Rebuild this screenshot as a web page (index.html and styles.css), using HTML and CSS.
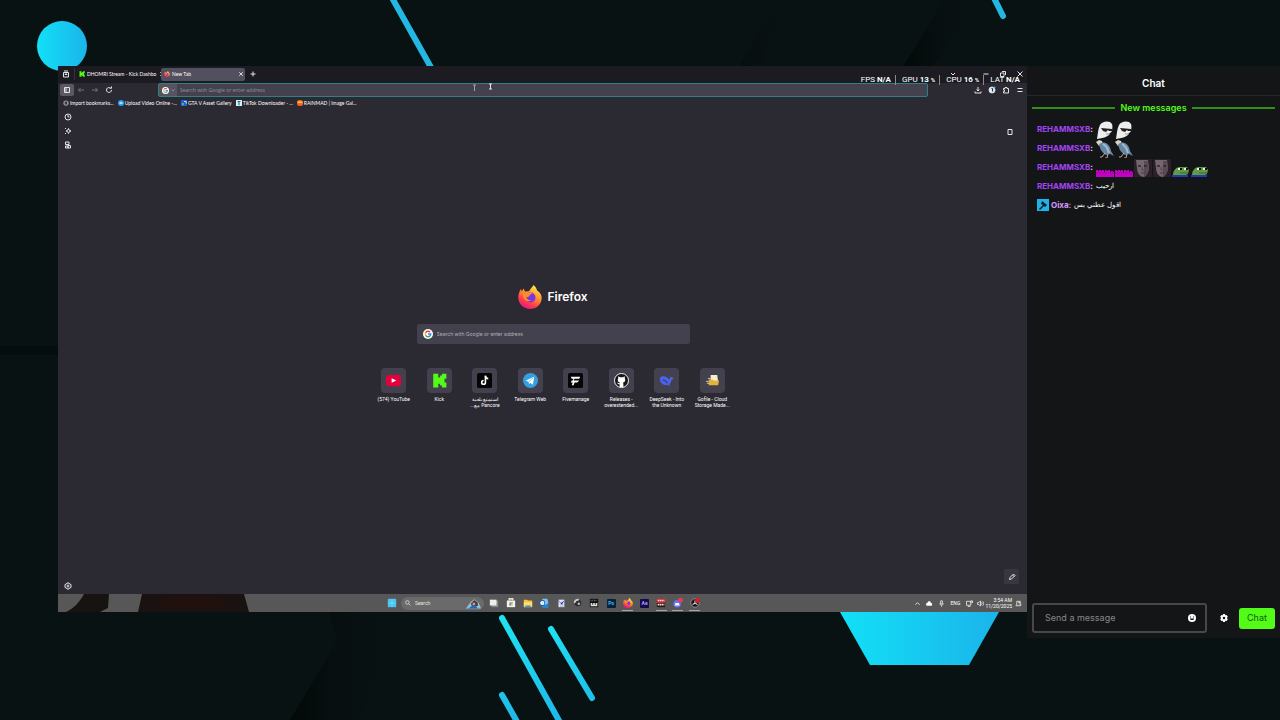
FILE: index.html
```html
<!DOCTYPE html>
<html lang="en">

<head>
    <meta charset="UTF-8">
    <meta name="viewport" content="width=device-width, initial-scale=1.0">
    <title>Stream</title>
    <link rel="stylesheet" href="styles.css">
</head>

<body>
    <svg class="backdrop" viewBox="0 0 1280 720" preserveAspectRatio="xMidYMid slice" aria-hidden="true">
        <defs>
            <linearGradient id="cyan" x1="0" x2="1">
                <stop offset="0" stop-color="#12e0f7" />
                <stop offset="1" stop-color="#1bb4ea" />
            </linearGradient>
            <linearGradient id="stripe" gradientUnits="userSpaceOnUse" x1="0" y1="618" x2="0" y2="740">
                <stop offset="0" stop-color="#1fe3f0" />
                <stop offset="1" stop-color="#1eb0e8" />
            </linearGradient>
            <linearGradient id="shade" x1="0" x2="1">
                <stop offset="0" stop-color="#030808" />
                <stop offset="1" stop-color="#091213" stop-opacity="0" />
            </linearGradient>
        </defs>
        <rect width="1280" height="720" fill="#091213" />
        <path d="M329 612l8 29-47 79h70l40-108z" fill="url(#shade)" />
        <path d="M945 0l-42 66h30l50-66z" fill="url(#shade)" />
        <path d="M775 0l-35 66h20l30-66z" fill="url(#shade)" opacity=".5" />
        <path d="M0 346h58v9H0z" fill="#060d0e" />
        <circle cx="62" cy="46" r="25" fill="url(#cyan)" />
        <path d="M840 612h159l-30 53h-99z" fill="url(#cyan)" />
        <g stroke-width="6" stroke-linecap="round">
            <path d="M391-4l42 75M993-4l10 20" stroke="#22b8e2" />
            <path d="M502 618l60 108M551 629l41 69M502 695l18 32" stroke="url(#stripe)" />
        </g>
    </svg>

    <svg class="sprite" aria-hidden="true">
        <defs>
            <linearGradient id="flame" x1=".8" y1="0" x2=".3" y2="1">
                <stop offset="0" stop-color="#fff44f" />
                <stop offset=".4" stop-color="#ff9a2b" />
                <stop offset=".75" stop-color="#ff3b4b" />
                <stop offset="1" stop-color="#e31587" />
            </linearGradient>
        </defs>
        <symbol id="firefox" viewBox="0 0 24 24">
            <path d="M15.5 0c2 1.600 3 3.500 3.600 5.500C22.500 7.500 24 10.500 23.600 14 23 20 18 24 12 24 5.500 24 .3 19 .3 12.500.3 9 1.500 6 3 4l.8 2.500L5.500 3.500l1.500 3 4-.3c1.500-2.500 3-3.700 4.500-6.200z" fill="url(#flame)" />
            <circle cx="12.500" cy="12.500" r="5" fill="#7a35e0" />
            <path d="M5 8c2-1.500 4-1 5.500-.5 1 .5 2.500.3 3.500.5-.5 1.500-2 1.500-2.500 2.500-.5 1.500-2 2-3.500 1.500 1 2.500 3 3.500 5.500 3C9 18.500 4 14 5 8z" fill="#ff8a2b" />
        </symbol>
        <symbol id="google" viewBox="0 0 24 24">
            <circle cx="12" cy="12" r="12" fill="#fff" />
            <g fill="none" stroke-width="3.500">
                <path d="M17 7.500A6.500 6.500 0 0 0 6.300 9" stroke="#ea4335" />
                <path d="M6.300 9a6.500 6.500 0 0 0 0 6" stroke="#fbbc05" />
                <path d="M6.300 15a6.500 6.500 0 0 0 10 2" stroke="#34a853" />
                <path d="M16.300 17c1.500-1.300 2.200-3 2.200-5H12" stroke="#4285f4" />
            </g>
        </symbol>
        <symbol id="kick" viewBox="0 0 24 24">
            <path d="M2 1h8v6h3V4h3V1h7v8h-3v6h3v8h-7v-3h-3v-3h-3v6H2z" fill="#53fc18" />
        </symbol>
        <symbol id="close" viewBox="0 0 10 10">
            <path d="M2 2l6 6M8 2L2 8" stroke="#ddd" stroke-width="1.600" />
        </symbol>
        <symbol id="ghost" viewBox="0 0 18 18">
            <path d="M1 18C2 12 2 8 4 4 6 0 14-1 16 3c1 3 0 5 0 7-1 2-3 2-3 4-2 2-6 3-12 4z" fill="#ededed" />
            <path d="M5 7l11 1v2h-3l-1-1-2 2-3-1z" fill="#222" />
            <path d="M10 13h4" stroke="#999" />
        </symbol>
        <symbol id="bird" viewBox="0 0 18 18">
            <path d="M0 2l3-2 3 1 1 3-4 2z" fill="#d8d4cb" />
            <path d="M3 4c6-4 11 0 12 7l3 5-4-2-4 1C5 12 4 8 3 4z" fill="#6686a5" />
            <path d="M7 4c4 2 5 5 6 9" stroke="#a0b9ce" stroke-width="2" fill="none" />
            <path d="M9 13l-3 4H4M12 14l-1 4H9" stroke="#c3a78c" fill="none" />
        </symbol>
        <symbol id="bars" viewBox="0 0 18 18">
            <path d="M0 18v-7h2v1h1v-1h2v1h1v-1h2v2h1v-2h2v1h1v-1h2v2h1v-1h2v1h1v5z" fill="#c400c4" />
            <path d="M0 14h18" stroke="#7d0b82" stroke-dasharray="1 1" />
        </symbol>
        <symbol id="face" viewBox="0 0 18 18">
            <path d="M0 0h18v18H0z" fill="#2b2029" />
            <path d="M2 1h12l1 9c-1 4-3 8-6 8-4-1-6-5-6-9z" fill="#75656d" />
            <path d="M10 2h4l1 8c-1 4-3 7-5 8z" fill="#5a4a53" />
            <path d="M4 7h3M10 7h3" stroke="#30242b" stroke-width="1.500" />
            <path d="M7 14h4" stroke="#4a363e" />
            <path d="M8 8v3h2" stroke="#54454d" fill="none" />
        </symbol>
        <symbol id="frog" viewBox="0 0 18 18">
            <path d="M1 16c0-4 2-7 6-8h8l2 3-1 4-4 2H1z" fill="#5f9a45" />
            <path d="M6 9h4v2H6zM12 9h4v2h-4z" fill="#eee" />
            <path d="M8 9h2v2H8zM14 9h2v2h-2z" fill="#111" />
            <path d="M8 14h8" stroke="#3f6b2c" />
            <path d="M0 17h16" stroke="#2437bd" stroke-width="2" />
        </symbol>
    </svg>

    <div class="stage">
        <main class="browser">
            <div class="tab-strip">
                <button class="icon-btn view-btn" aria-label="Firefox View"><svg viewBox="0 0 16 16"><path d="M3 5h10v9H3zM4 2h8M6 8h4v1H6z" /></svg></button>
                <div class="tab">
                    <svg class="favicon"><use href="#kick" /></svg>
                    <span class="tab-title">DHOMRI Stream - Kick Dashbo</span>
                    <button class="icon-btn tab-close" aria-label="Close tab"><svg><use href="#close" /></svg></button>
                </div>
                <div class="tab tab-active">
                    <svg class="favicon"><use href="#firefox" /></svg>
                    <span class="tab-title">New Tab</span>
                    <button class="icon-btn tab-close" aria-label="Close tab"><svg><use href="#close" /></svg></button>
                </div>
                <button class="icon-btn add-tab" aria-label="New tab"><svg viewBox="0 0 16 16"><path d="M8 3v10M3 8h10" /></svg></button>
                <div class="window-controls">
                    <button class="icon-btn list-tabs" aria-label="List tabs"><svg viewBox="0 0 16 16"><path d="M4 6l4 4 4-4" /></svg></button>
                    <button class="icon-btn" aria-label="Minimize"><svg viewBox="0 0 16 16"><path d="M3 8h10" /></svg></button>
                    <button class="icon-btn" aria-label="Restore"><svg viewBox="0 0 16 16"><path d="M3 6h7v7H3zM6 3h7v7" /></svg></button>
                    <button class="icon-btn" aria-label="Close"><svg viewBox="0 0 16 16"><path d="M3 3l10 10M13 3L3 13" /></svg></button>
                </div>
            </div>

            <div class="nav-bar">
                <div class="nav-buttons">
                    <button class="icon-btn pressed" aria-label="Sidebar"><svg viewBox="0 0 16 16"><path d="M3 3h10v10H3zM6 3v10" /></svg></button>
                    <button class="icon-btn dim" aria-label="Back"><svg viewBox="0 0 16 16"><path d="M14 8H3M7 4L3 8l4 4" /></svg></button>
                    <button class="icon-btn dim" aria-label="Forward"><svg viewBox="0 0 16 16"><path d="M2 8h11M9 4l4 4-4 4" /></svg></button>
                    <button class="icon-btn" aria-label="Reload"><svg viewBox="0 0 16 16"><path d="M13 8a5 5 0 1 1-2-4M9 4.500h4V1" /></svg></button>
                </div>
                <div class="url-bar">
                    <button class="engine-btn" aria-label="Search engine">
                        <svg class="engine"><use href="#google" /></svg>
                        <svg class="caret" viewBox="0 0 8 8"><path d="M1 3l3 3 3-3" /></svg>
                    </button>
                    <input type="text" class="url-input" placeholder="Search with Google or enter address" aria-label="Address">
                </div>
                <div class="nav-tools">
                    <button class="icon-btn" aria-label="Downloads"><svg viewBox="0 0 16 16"><path d="M8 2v8M5 7l3 3 3-3M2 11v3h12v-3" /></svg></button>
                    <button class="icon-btn" aria-label="Account"><svg viewBox="0 0 16 16"><circle cx="8" cy="8" r="6" fill="#d6e9f5" /><path d="M7 5h2v6" stroke="#2b2a33" /><circle cx="13" cy="3" r="2" fill="#35b6f2" stroke="none" /></svg></button>
                    <button class="icon-btn" aria-label="Extensions"><svg viewBox="0 0 16 16"><path d="M3 5h3V3h4v2h3v9H3v-3h2V8H3z" /></svg></button>
                    <button class="icon-btn" aria-label="Menu"><svg viewBox="0 0 16 16"><path d="M3 5h10M3 11h10" /></svg></button>
                </div>
            </div>

            <nav class="bookmarks">
                <a href="#"><svg viewBox="0 0 8 8"><circle cx="4" cy="4" r="3.500" fill="#9a99a3" /><path d="M3 2v4M5 2L3.500 4 5 6" stroke="#222" /></svg>Import bookmarks...</a>
                <a href="#"><svg viewBox="0 0 8 8"><circle cx="4" cy="4" r="4" fill="#2d9ff0" /><path d="M2 4h4" stroke="#d7efff" stroke-width="2" /></svg>Upload Video Online -...</a>
                <a href="#"><svg viewBox="0 0 8 8"><path d="M0 0h8v8H0z" fill="#2458e6" /><path d="M1 4h3v3H1z" fill="#35c759" /><path d="M4 2h3v3" stroke="#fff" fill="none" /></svg>GTA V Asset Gallery</a>
                <a href="#"><svg viewBox="0 0 8 8"><path d="M0 0h8v8H0z" fill="#d9f1f2" /><path d="M2 2h4M4 2v5" stroke="#147a80" stroke-width="1.500" /></svg>TikTok Downloader - ...</a>
                <a href="#"><svg viewBox="0 0 8 8"><rect width="8" height="8" rx="3" fill="#f0641e" /><path d="M1 3h6" stroke="#ffd13b" stroke-width="2" /></svg>RAINMAD | Image Gal...</a>
            </nav>

            <div class="browser-body">
                <aside class="sidebar">
                    <button class="icon-btn" aria-label="History"><svg viewBox="0 0 16 16"><circle cx="8" cy="8" r="6" /><path d="M8 4v4h3" /></svg></button>
                    <button class="icon-btn" aria-label="AI chat"><svg viewBox="0 0 16 16"><path d="M9 3l1.500 3.500L14 8l-3.500 1.500L9 13 7.500 9.500 4 8l3.500-1.500zM2 2l2 2M2 14l2-2" /></svg></button>
                    <button class="icon-btn" aria-label="Synced tabs"><svg viewBox="0 0 16 16"><path d="M3 2h7v5H3zM3 10h5v4H3zM8 9h5v5H8z" /></svg></button>
                    <button class="icon-btn side-settings" aria-label="Settings"><svg viewBox="0 0 16 16"><circle cx="8" cy="8" r="2" /><path d="M6 2h4l1 2 3 1v6l-3 1-1 2H6l-1-2-3-1V5l3-1z" /></svg></button>
                </aside>

                <section class="new-tab">
                    <button class="icon-btn device-btn" aria-label="Device"><svg viewBox="0 0 16 16"><path d="M4 3h8v10H4z" /></svg></button>
                    <div class="new-tab-center">
                        <div class="brand">
                            <svg><use href="#firefox" /></svg>
                            <h1>Firefox</h1>
                        </div>
                        <div class="home-search">
                            <svg><use href="#google" /></svg>
                            <input type="text" placeholder="Search with Google or enter address" aria-label="Search">
                        </div>
                        <div class="shortcuts">
                            <a href="#"><span class="tile"><svg viewBox="0 0 16 16"><rect y="2" width="16" height="12" rx="3" fill="#e5003b" /><path d="M6 5.500l5 2.500-5 2.500z" fill="#fff" /></svg></span>(574) YouTube</a>
                            <a href="#"><span class="tile"><svg><use href="#kick" /></svg></span>Kick</a>
                            <a href="#" dir="rtl"><span class="tile"><svg viewBox="0 0 16 16"><rect width="16" height="16" rx="2" fill="#050505" /><path d="M9 3v7a2 2 0 1 1-2-2" stroke="#fff" stroke-width="1.700" fill="none" /><path d="M9 3c0 2 1 3 3 3" stroke="#fff" stroke-width="1.700" fill="none" /></svg></span>استمتع بلعبة<br>Pancore مع...</a>
                            <a href="#"><span class="tile"><svg viewBox="0 0 16 16"><circle cx="8" cy="8" r="8" fill="#369fe0" /><path d="M3 8l9-4-1.500 8.500L7.500 10.500 6.500 12 6 9.500z" fill="#fff" /><path d="M6 9.500L11 5" stroke="#369fe0" stroke-width=".6" /></svg></span>Telegram Web</a>
                            <a href="#"><span class="tile"><svg viewBox="0 0 16 16"><rect width="16" height="16" rx="2" fill="#050505" /><path d="M3 4h10l-1 2H7L6 8h6l-2 2H7l-1 3H4l1-3H3l1-2h1l1-2H4z" fill="#fff" /></svg></span>Fivemanage</a>
                            <a href="#"><span class="tile"><svg viewBox="0 0 16 16"><circle cx="8" cy="8" r="7.500" fill="#161616" stroke="#fff" /><path d="M6 15v-3c-2 0-2-1-3-2 1 0 2 1 3 1l.3-1C4 9.500 3.500 8 4.500 5.500V3.500L6.500 4.500h3l2-1v2c1 2.500.5 4-1.800 4.500L10 12v3z" fill="#fff" /></svg></span>Releases -<br>overextended...</a>
                            <a href="#"><span class="tile"><svg viewBox="0 0 16 16"><path d="M1 5c2-2 5-2 8 0l2 2c1-.5 1-2 .5-3.500 1 1 2 1.500 4 1-.5 2-1.500 3-2.500 3.500 0 2-1 3-2 4l1 1.500-3-.8C4 13.500.5 10 1 5z" fill="#4b63f0" /><path d="M4 7.500c2 0 4 2 5 3.500" stroke="#3a3944" stroke-width="1.200" fill="none" /></svg></span>DeepSeek - Into<br>the Unknown</a>
                            <a href="#"><span class="tile"><svg viewBox="0 0 16 16"><path d="M6 2h7l1 7H6z" fill="#f6ecd0" /><path d="M4 7h4l1 1h6l-1 5H4z" fill="#e2b13c" /><path d="M1 9h3M2 11h3M3 6h3" stroke="#d8cba4" /></svg></span>Gofile - Cloud<br>Storage Made...</a>
                        </div>
                    </div>
                    <button class="icon-btn edit-btn" aria-label="Customize"><svg viewBox="0 0 16 16"><path d="M3 13l1-4 7-7 3 3-7 7zM9 4l3 3" /></svg></button>
                </section>
            </div>

            <footer class="taskbar">
                <svg class="taskbar-wallpaper" viewBox="0 0 200 18" aria-hidden="true">
                    <path d="M8 18C16 14 21 9 26 0h25l-1 14-8 4z" fill="#171311" />
                    <path d="M84 0h102l5 18H80z" fill="#1a1211" />
                    <path d="M104 3c20-3 50-1 60 0l8 12H96z" fill="#20110f" />
                </svg>
                <div class="taskbar-apps">
                    <button class="icon-btn app start" aria-label="Start"><svg viewBox="0 0 12 12"><path d="M1 1h10v10H1z" fill="#48c5f5" /><path d="M6 1v10M1 6h10" stroke="#8fe0fb" stroke-width=".6" /></svg></button>
                    <label class="task-search">
                        <svg viewBox="0 0 10 10"><circle cx="4" cy="4" r="3" fill="none" stroke="#fff" /><path d="M6.500 6.500L9 9" stroke="#fff" /></svg>
                        <input type="text" placeholder="Search" aria-label="Taskbar search">
                        <svg class="doodle" viewBox="0 0 20 12"><path d="M1 12l6-8 4-3 5 4 3 7z" fill="#92bdd8" /><path d="M7 6l4-4 4 3v4H8z" fill="#4a3539" /><path d="M4 12l5-4 4 1 2 3z" fill="#1c6cb3" /><path d="M9 5h3v3H9z" fill="#d39b80" /></svg>
                    </label>
                    <div class="app-list">
                        <button class="icon-btn app" aria-label="Task view"><svg viewBox="0 0 12 12"><path d="M3 3h8v8H3z" fill="#888" /><path d="M1 2h8v7H1z" fill="#eee" /></svg></button>
                        <button class="icon-btn app" aria-label="Store"><svg viewBox="0 0 12 12"><path d="M1 3h10v8H1z" fill="#f1f1f1" /><path d="M4 3V1h4v2" fill="none" stroke="#ddd" /><path d="M4 5h2v2H4z" fill="#e74" /><path d="M6 5h2v2H6z" fill="#6b4" /><path d="M4 7h2v2H4z" fill="#38d" /><path d="M6 7h2v2H6z" fill="#fb3" /></svg></button>
                        <button class="icon-btn app" aria-label="Files"><svg viewBox="0 0 12 12"><path d="M1 2h4l1 1h5v8H1z" fill="#f5c23b" /><path d="M1 5h10v5H1z" fill="#ffdc6b" /><path d="M3 9h6v2H3z" fill="#2f8fe3" /></svg></button>
                        <button class="icon-btn app" aria-label="Outlook"><svg viewBox="0 0 12 12"><path d="M4 1h6l1 4v6H4z" fill="#7cc6f5" /><path d="M3 6l4 3 4-3v5H4z" fill="#1a82d8" /><circle cx="4" cy="6" r="3.500" fill="#1566b8" /><circle cx="4" cy="6" r="1.500" fill="none" stroke="#fff" /></svg></button>
                        <button class="icon-btn app" aria-label="Notes"><svg viewBox="0 0 12 12"><path d="M3 2h7v9H3z" fill="#dfe3f5" /><path d="M1 1l5 5 4-3-3 5z" fill="#2a2ca8" /><path d="M5 8h4M5 10h4" stroke="#8a91c6" stroke-width=".7" /></svg></button>
                        <button class="icon-btn app" aria-label="Player"><svg viewBox="0 0 12 12"><circle cx="6" cy="6" r="4" fill="#2c2c33" /><path d="M2 6c0-3 3-4 5-4" stroke="#ccc" fill="none" /><circle cx="7" cy="7" r="1.500" fill="#b9b9c0" /></svg></button>
                        <button class="icon-btn app" aria-label="Live"><svg viewBox="0 0 12 12"><path d="M1 1h10v10H1z" fill="#101010" /><path d="M2 7h2M5 7h2M8 7h2M2 9h8" stroke="#ddd" /><path d="M2 3h8" stroke="#777" stroke-dasharray="1 1" /></svg></button>
                        <button class="icon-btn app photoshop">Ps</button>
                        <button class="icon-btn app running" aria-label="Firefox"><svg><use href="#firefox" /></svg></button>
                        <button class="icon-btn app after-effects">Ae</button>
                        <button class="icon-btn app running" aria-label="Recorder"><svg viewBox="0 0 12 12"><path d="M1 1h10v5H1z" fill="#d9252f" /><path d="M1 6h10v5H1z" fill="#211b1c" /><path d="M2 3h8M2 8h8" stroke="#f5d5d5" stroke-dasharray="2 .5" /></svg></button>
                        <button class="icon-btn app running" aria-label="Discord"><svg viewBox="0 0 12 12"><circle cx="5" cy="7" r="4.500" fill="#6474f2" /><path d="M3 6h4l1 3H2z" fill="#fff" /><rect x="6" width="6" height="5" rx="2" fill="#e73b55" /></svg></button>
                        <button class="icon-btn app running" aria-label="OBS"><svg viewBox="0 0 12 12"><circle cx="6" cy="6" r="5" fill="#151515" stroke="#ccc" stroke-width=".7" /><path d="M6 6V3M6 6l3 2M6 6L3 8" stroke="#ddd" stroke-width="1.300" /><circle cx="9" cy="3" r="3" fill="#d91c2a" /></svg></button>
                    </div>
                </div>
                <div class="tray">
                    <button class="icon-btn" aria-label="Hidden icons"><svg viewBox="0 0 16 16"><path d="M3 11l5-5 5 5" /></svg></button>
                    <button class="icon-btn" aria-label="OneDrive"><svg viewBox="0 0 16 16"><path d="M3 13a3 3 0 0 1 0-6c1-5 7-5 8-1 4 0 4 7 1 7z" fill="#fff" stroke="none" /></svg></button>
                    <button class="icon-btn" aria-label="Microphone"><svg viewBox="0 0 16 16"><path d="M6 2h4v7H6zM4 8c0 5 8 5 8 0M8 12v3" /></svg></button>
                    <span class="lang">ENG</span>
                    <button class="icon-btn" aria-label="Network"><svg viewBox="0 0 16 16"><path d="M1 3h10v9H1zM4 15h6M11 2h4v4h-4z" /></svg></button>
                    <button class="icon-btn volume" aria-label="Volume"><svg viewBox="0 0 16 16"><path d="M1 6h3l4-4v12l-4-4H1zM10 5c2 2 2 4 0 6M13 3c3 3 3 7 0 10" /></svg></button>
                    <time class="clock">3:54 AM<br>11/20/2025</time>
                    <button class="icon-btn" aria-label="Notifications"><svg viewBox="0 0 16 16"><path d="M13 3H4v8l-2 2h11V9M7 6h7M9 9h5" /></svg></button>
                </div>
            </footer>

            <!-- performance overlay -->
            <div class="perf">
                <span>FPS <b>N/A</b></span>
                <span>GPU <b>13 <small>%</small></b></span>
                <span>CPU <b>16 <small>%</small></b></span>
                <span>LAT <b>N/A</b></span>
            </div>
            <svg class="cursors" viewBox="0 0 20 10" aria-hidden="true">
                <path d="M0 2h3M1.500 2v6" stroke="#a5a3ab" />
                <path d="M16 1h3M17.500 1v5M16 6h3" stroke="#e4e3e8" />
            </svg>
        </main>

        <aside class="chat">
            <h2 class="chat-header">Chat</h2>
            <div class="chat-new">New messages</div>
            <ul class="messages">
                <li><b class="user">REHAMMSXB</b><b class="colon">:</b><svg class="emote"><use href="#ghost" /></svg><svg class="emote"><use href="#ghost" /></svg></li>
                <li><b class="user">REHAMMSXB</b><b class="colon">:</b><svg class="emote"><use href="#bird" /></svg><svg class="emote"><use href="#bird" /></svg></li>
                <li><b class="user">REHAMMSXB</b><b class="colon">:</b><svg class="emote"><use href="#bars" /></svg><svg class="emote"><use href="#bars" /></svg><svg class="emote"><use href="#face" /></svg><svg class="emote"><use href="#face" /></svg><svg class="emote"><use href="#frog" /></svg><svg class="emote"><use href="#frog" /></svg></li>
                <li><b class="user">REHAMMSXB</b><b class="colon">:</b><span class="text" dir="rtl">ارحيب</span></li>
                <li><svg class="badge" viewBox="0 0 12 12"><path d="M0 0h12v12H0z" fill="#1fb2e8" /><path d="M5 2l5 4-2 2-1-1-4 4-1-1 4-4-2-1z" fill="#101820" /></svg><b class="user mod">Oixa</b><b class="colon mod">:</b><span class="text" dir="rtl">اقول عطني بس</span></li>
            </ul>
            <form class="chat-form">
                <div class="message-box">
                    <input type="text" placeholder="Send a message" aria-label="Send a message">
                    <button type="button" class="icon-btn" aria-label="Emotes"><svg viewBox="0 0 16 16"><circle cx="8" cy="8" r="8" fill="#fff" stroke="none" /><path d="M4 5h2v2H4zM10 5h2v2h-2zM4 9h8c0 4-8 4-8 0z" fill="#111" stroke="none" /></svg></button>
                </div>
                <button type="button" class="icon-btn chat-settings" aria-label="Chat settings"><svg viewBox="0 0 16 16"><path d="M6 0h4l.5 2.500L13 1.800l2.500 3.400L14 8l1.500 2.800-2.500 3.400-2.500-.7L10 16H6l-.5-2.500-2.500.7L.5 10.800 2 8 .5 5.200 3 1.800l2.500.7z" fill="#fff" stroke="none" /><circle cx="8" cy="8" r="2.500" fill="#141517" stroke="none" /></svg></button>
                <button type="button" class="send-btn">Chat</button>
            </form>
        </aside>
    </div>
</body>

</html>
```

FILE: styles.css
```css
* {
    box-sizing: border-box;
}

body {
    margin: 0;
    background-color: #091213;
    color: #fff;
    font-family: Inter, "Noto Sans", sans-serif;
}

button,
input {
    font: inherit;
    color: inherit;
    border: none;
    background: none;
    padding: 0;
    margin: 0;
}

input {
    min-width: 0;
    outline: none;
}

a {
    color: inherit;
    text-decoration: none;
}

svg {
    display: block;
    flex-shrink: 0;
}

.backdrop {
    position: fixed;
    inset: 0;
    width: 100%;
    height: 100%;
    z-index: -1;
}

.sprite {
    position: absolute;
    width: 0;
    height: 0;
}

.stage {
    min-height: 100vh;
    display: grid;
    grid-template-columns: minmax(0, 1fr) 253px;
    padding: 66px 0 82px 58px;
}

.icon-btn {
    display: flex;
    align-items: center;
    justify-content: center;
    flex-shrink: 0;
    width: 14px;
    height: 12px;
}

.icon-btn svg {
    width: 8px;
    height: 8px;
    fill: none;
    stroke: #e4e3e8;
    stroke-width: 2;
}

/* browser window */
.browser {
    position: relative;
    display: flex;
    flex-direction: column;
    margin-bottom: 26px;
    background-color: #2b2a33;
    font-family: Roboto, "Noto Sans", sans-serif;
    font-size: 5px;
    line-height: 6px;
}

.tab-strip {
    display: flex;
    align-items: center;
    height: 17px;
    padding-bottom: 1px;
    background-color: #1c1b22;
    font-family: Lato, sans-serif;
}

.view-btn {
    width: 17px;
    border-right: 1px solid #35343d;
}

.tab {
    display: flex;
    align-items: center;
    gap: 2px;
    width: 84px;
    height: 13px;
    padding-left: 3px;
    margin-left: 1px;
    border-radius: 2px;
}

.tab-active {
    background-color: #52505e;
}

.favicon {
    width: 6px;
    height: 6px;
}

.tab-title {
    flex: 1;
    white-space: nowrap;
}

.tab-close {
    width: 8px;
}

.tab-close svg {
    width: 6px;
    height: 6px;
}

.add-tab {
    margin-left: 1px;
}

.window-controls {
    display: flex;
    gap: 3px;
    margin-left: auto;
}

.list-tabs {
    margin-right: 16px;
}

.nav-bar {
    display: flex;
    align-items: center;
    height: 14px;
}

.nav-buttons {
    display: flex;
    width: 100px;
    padding-left: 2px;
}

.pressed {
    background-color: #5b5966;
    border-radius: 2px;
}

.dim {
    opacity: 0.4;
}

.url-bar {
    flex: 1;
    display: flex;
    align-items: center;
    height: 14px;
    border: 1px solid #2f7f83;
    border-radius: 2px;
    background-color: #42414d;
    font-family: "Open Sans", sans-serif;
}

.engine-btn {
    display: flex;
    align-items: center;
    gap: 2px;
    height: 12px;
    padding: 0 2px 0 3px;
    background-color: #565461;
}

.engine {
    width: 7px;
    height: 7px;
}

.caret {
    width: 4px;
    height: 4px;
    fill: none;
    stroke: #bbb;
}

.url-input {
    flex: 1;
    padding-left: 3px;
}

.url-input::placeholder {
    color: #94929e;
    opacity: 1;
}

.nav-tools {
    display: flex;
    width: 99px;
    justify-content: flex-end;
}

.bookmarks {
    display: flex;
    align-items: center;
    gap: 4px;
    height: 12px;
    padding-left: 5px;
    font-family: Lato, sans-serif;
    white-space: nowrap;
}

.bookmarks a {
    display: flex;
    align-items: center;
    gap: 1px;
}

.bookmarks svg {
    width: 6px;
    height: 6px;
}

.browser-body {
    flex: 1;
    display: flex;
}

.sidebar {
    display: flex;
    flex-direction: column;
    align-items: center;
    gap: 2px;
    width: 20px;
    padding: 2px 0;
}

.side-settings {
    margin-top: auto;
}

.new-tab {
    flex: 1;
    display: flex;
    flex-direction: column;
    justify-content: space-between;
    align-items: flex-end;
    padding: 17px 8px 10px 0;
}

.new-tab-center {
    align-self: center;
    display: flex;
    flex-direction: column;
    align-items: center;
    margin: 0 0 14px 9px;
}

.device-btn {
    margin-right: 2px;
}

.brand {
    display: flex;
    align-items: center;
    gap: 5px;
}

.brand svg {
    width: 24px;
    height: 24px;
}

.brand h1 {
    margin: 0;
    font-family: Inter, sans-serif;
    font-size: 12px;
    font-weight: 600;
    line-height: 16px;
}

.home-search {
    display: flex;
    align-items: center;
    gap: 4px;
    width: 273px;
    height: 20px;
    margin: 15px 0 24px;
    padding: 0 6px;
    border-radius: 2px;
    background-color: #42414d;
    font-family: Inter, sans-serif;
}

.home-search svg {
    width: 10px;
    height: 10px;
}

.home-search input {
    flex: 1;
}

.home-search input::placeholder {
    color: #b2b1ba;
    opacity: 1;
}

.shortcuts {
    display: grid;
    grid-template-columns: repeat(8, 1fr);
    width: 364px;
    text-align: center;
}

.shortcuts a {
    display: flow-root;
    white-space: nowrap;
}

.tile {
    display: flex;
    align-items: center;
    justify-content: center;
    width: 25px;
    height: 25px;
    margin: 0 auto 3px;
    border-radius: 4px;
    background-color: #42414d;
}

.tile svg {
    width: 15px;
    height: 15px;
}

.edit-btn {
    width: 15px;
    height: 15px;
    border-radius: 2px;
    background-color: #383740;
}

/* taskbar */
.taskbar {
    position: relative;
    display: grid;
    grid-template-columns: 1fr auto 1fr;
    align-items: center;
    height: 18px;
    background-color: #585757;
}

.taskbar-wallpaper {
    position: absolute;
    left: 0;
    top: 0;
    width: 200px;
    height: 18px;
}

.taskbar-apps {
    grid-column: 2;
    display: flex;
    align-items: center;
    padding-left: 4px;
}

.app {
    width: 11px;
    height: 16px;
}

.app svg {
    width: 10px;
    height: 10px;
    stroke: none;
}

.start {
    margin-right: 4px;
}

.task-search {
    display: flex;
    align-items: center;
    gap: 4px;
    width: 83px;
    height: 13px;
    margin-right: 2px;
    padding: 0 2px 0 4px;
    border-radius: 7px;
    background-color: #6b6a6a;
}

.task-search svg {
    width: 6px;
    height: 6px;
}

.task-search input {
    flex: 1;
}

.task-search input::placeholder {
    color: #e6e6e6;
    opacity: 1;
}

.task-search .doodle {
    width: 17px;
    height: 11px;
}

.app-list {
    display: grid;
    grid-template-columns: repeat(13, 1fr);
    justify-items: center;
    width: 217px;
}

.photoshop,
.after-effects {
    align-self: center;
    width: 9px;
    height: 9px;
    border-radius: 1px;
    background-color: #06223a;
    color: #4fb4f5;
    font-weight: 700;
}

.after-effects {
    background-color: #120a4a;
    color: #a9a0fa;
}

.running {
    border-bottom: 1px solid #a5a5aa;
}

.tray {
    display: flex;
    align-items: center;
    justify-content: flex-end;
    padding-right: 3px;
}

.tray .icon-btn {
    width: 12px;
}

.tray .icon-btn svg {
    width: 7px;
    height: 7px;
}

.tray .volume {
    width: 10px;
}

.lang {
    width: 16px;
    text-align: center;
}

.clock {
    text-align: right;
}

.perf {
    position: absolute;
    top: 9px;
    right: 7px;
    display: flex;
    font-size: 8px;
    line-height: 10px;
}

.perf span {
    padding-left: 6px;
}

.perf span + span {
    margin-left: 4px;
    border-left: 1px solid #8b8a90;
}

.perf b {
    font-weight: 700;
}

.perf small {
    font-size: 6px;
}

.cursors {
    position: absolute;
    left: 415px;
    top: 17px;
    width: 20px;
    height: 10px;
}

/* chat */
.chat {
    display: flex;
    flex-direction: column;
    background-color: #141517;
    font-size: 9px;
    line-height: 12px;
}

.chat-header {
    margin: 0;
    padding: 11px 0 6px;
    border-bottom: 1px solid #25272a;
    font-size: 10px;
    font-weight: 600;
    text-align: center;
}

.chat-new {
    display: flex;
    align-items: center;
    gap: 5px;
    padding: 6px 5px 5px;
    color: #53fc18;
    font-weight: 600;
}

.chat-new::before,
.chat-new::after {
    content: "";
    flex: 1;
    height: 2px;
    background-color: #2f8f18;
}

.messages {
    flex: 1;
    display: grid;
    grid-auto-rows: 19px;
    margin: 0;
    padding: 0 10px;
    list-style: none;
    font-size: 8px;
}

.messages li {
    display: flex;
    align-items: center;
}

.messages .user {
    color: #a344f5;
}

.messages .colon {
    margin-right: 3px;
}

.messages .mod {
    color: #d79bff;
}

.emote {
    width: 18px;
    height: 18px;
    margin: 2px 1px 0 0;
}

.text {
    font-size: 7px;
}

.badge {
    width: 12px;
    height: 12px;
    margin-right: 2px;
}

.chat-form {
    display: flex;
    align-items: center;
    padding: 0 5px 5px;
}

.message-box {
    flex: 1;
    min-width: 0;
    display: flex;
    align-items: center;
    height: 30px;
    padding: 0 6px 0 11px;
    border: 2px solid #46484b;
    border-radius: 3px;
}

.message-box input {
    flex: 1;
}

.message-box input::placeholder {
    color: #85888c;
    opacity: 1;
}

.chat-settings {
    margin: 0 8px 0 10px;
}

.send-btn {
    flex-shrink: 0;
    width: 36px;
    height: 21px;
    border-radius: 3px;
    background-color: #53fc18;
    color: #14600a;
}
```
